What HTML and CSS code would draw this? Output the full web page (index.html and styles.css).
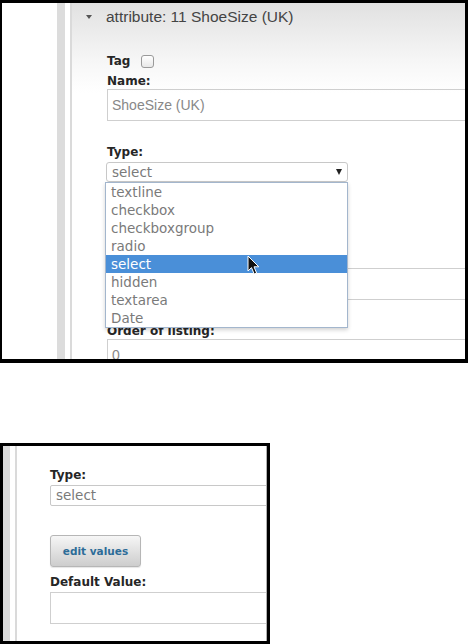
FILE: index.html
```html
<!DOCTYPE html>
<html lang="en">

<head>
    <meta charset="UTF-8">
    <meta name="viewport" content="width=device-width, initial-scale=1.0">
    <title>Attribute Type</title>
    <link rel="stylesheet" href="styles.css">
</head>

<body>
    <div class="shot shot-top">
        <div class="gutter"></div>
        <div class="rail"></div>
        <div class="gap"></div>
        <div class="panel">
            <div class="panel-head"><span class="caret"></span>attribute: 11 ShoeSize (UK)</div>
            <div class="panel-body">
                <div class="tag-row"><span class="label">Tag</span><span class="check"></span></div>
                <div class="label label-name">Name:</div>
                <div class="input">ShoeSize (UK)</div>
                <div class="label label-gap">Type:</div>
                <div class="select-wrap">
                    <div class="select">select<span class="arrow"></span></div>
                    <ul class="dropdown">
                        <li>textline</li>
                        <li>checkbox</li>
                        <li>checkboxgroup</li>
                        <li>radio</li>
                        <li class="active">select</li>
                        <li>hidden</li>
                        <li>textarea</li>
                        <li>Date</li>
                        <svg class="pointer" width="13" height="21" viewBox="0 0 13 21">
                            <path d="M1 1 L1 16 L4.5 12.6 L7.2 19 L9.6 18 L7 11.8 L11.8 11.8 Z" fill="#111" stroke="#fff" stroke-width="1"/>
                        </svg>
                    </ul>
                </div>
                <!-- these sit under the open list -->
                <div class="btn covered">edit values</div>
                <div class="label label-default covered">Default Value:</div>
                <div class="input"></div>
                <div class="label label-gap">Order of listing:</div>
                <div class="input">0</div>
            </div>
        </div>
    </div>

    <div class="shot shot-bottom">
        <div class="rail"></div>
        <div class="gap"></div>
        <div class="panel">
            <div class="panel-body">
                <div class="label">Type:</div>
                <div class="select select-wide">select</div>
                <div class="btn">edit values</div>
                <div class="label label-default">Default Value:</div>
                <div class="input"></div>
            </div>
        </div>
    </div>
</body>

</html>
```

FILE: styles.css
```css
body {
    margin: 0;
    padding: 0;
    background-color: #fff;
    font-family: "Liberation Sans", Arial, sans-serif;
}

.shot {
    display: flex;
    box-sizing: border-box;
    overflow: hidden;
    background-color: #fff;
    border: 3px solid #000;
}

.shot-top {
    width: 468px;
    height: 363px;
    border-left-width: 2px;
    border-bottom-width: 4px;
}

.shot-bottom {
    width: 270px;
    height: 201px;
    margin-top: 80px;
}

.gutter {
    width: 55px;
    flex: none;
}

.rail {
    width: 8px;
    flex: none;
    background-color: #dcdcdc;
}

.shot-bottom .rail {
    width: 7px;
}

.gap {
    width: 5px;
    flex: none;
}

.panel {
    flex: 1;
    min-width: 0;
    overflow: hidden;
    border-left: 2px solid #dadada;
}

.shot-top .panel {
    background: linear-gradient(#e1e1e1, #f7f7f7 60px, #fff 90px);
}

.shot-bottom .panel {
    border-right: 1px solid #b0b0b0;
}

.panel-head {
    display: flex;
    align-items: center;
    height: 28px;
    padding-left: 14px;
    font-size: 15.5px;
    color: #444;
}

.caret {
    width: 0;
    height: 0;
    margin-right: 14px;
    border-left: 3.5px solid transparent;
    border-right: 3.5px solid transparent;
    border-top: 4px solid #555;
}

.panel-body {
    padding: 23px 0 0 35px;
}

.shot-bottom .panel-body {
    padding: 22px 0 0 33px;
}

.label {
    display: block;
    font-family: "DejaVu Sans", sans-serif;
    font-weight: bold;
    font-size: 12px;
    line-height: 14px;
    color: #262626;
}

.tag-row {
    display: flex;
    align-items: center;
    height: 14px;
}

.check {
    width: 11px;
    height: 11px;
    margin-left: 11px;
    border: 1px solid #9a9a9a;
    border-radius: 3px;
    background: linear-gradient(#fff, #e8e8e8);
}

.label-name {
    margin-top: 6px;
}

.label-gap {
    margin-top: 24px;
}

.label-default {
    margin-top: 8px;
}

.covered {
    visibility: hidden;
}

.input {
    box-sizing: border-box;
    width: 600px;
    height: 32px;
    margin-top: 1px;
    padding: 0 4px;
    border: 1px solid #cfcfcf;
    font-size: 14px;
    line-height: 30px;
    color: #888;
}

.label-default + .input {
    margin-top: 3px;
}

.select-wrap {
    position: relative;
    margin-top: 3px;
}

.select {
    position: relative;
    box-sizing: border-box;
    width: 242px;
    height: 20px;
    margin-left: -1px;
    padding-left: 5px;
    border: 1px solid #c8c8c8;
    border-radius: 3px;
    font-family: "DejaVu Sans", sans-serif;
    font-size: 13.5px;
    line-height: 18px;
    color: #7a7a7a;
}

.select-wide {
    width: 600px;
    height: 21px;
    margin: 3px 0 0 0;
    line-height: 19px;
    border-radius: 2px;
}

.arrow {
    position: absolute;
    right: 5px;
    top: 6px;
    width: 0;
    height: 0;
    border-left: 3.5px solid transparent;
    border-right: 3.5px solid transparent;
    border-top: 6px solid #222;
}

.dropdown {
    position: absolute;
    left: -2px;
    top: 20px;
    z-index: 2;
    box-sizing: border-box;
    width: 243px;
    margin: 0;
    padding: 0;
    list-style: none;
    background-color: #fff;
    border: 1px solid #a3b6cd;
    box-shadow: 0 2px 4px rgba(0, 0, 0, 0.18);
}

.dropdown li {
    height: 18px;
    padding-left: 5px;
    font-family: "DejaVu Sans", sans-serif;
    font-size: 13.5px;
    line-height: 18px;
    color: #7a7a7a;
}

.dropdown li.active {
    background-color: #4a8fd8;
    color: #fff;
}

.pointer {
    position: absolute;
    left: 141px;
    top: 72px;
}

.btn {
    box-sizing: border-box;
    width: 91px;
    height: 32px;
    margin-top: 29px;
    border: 1px solid #b6b6b6;
    border-radius: 3px;
    background: linear-gradient(#f6f6f6, #cdcdcd);
    box-shadow: 0 1px 1px rgba(0, 0, 0, 0.1);
    text-align: center;
    font-family: "DejaVu Sans", sans-serif;
    font-weight: bold;
    font-size: 10.5px;
    line-height: 30px;
    color: #2d6c98;
}
```
